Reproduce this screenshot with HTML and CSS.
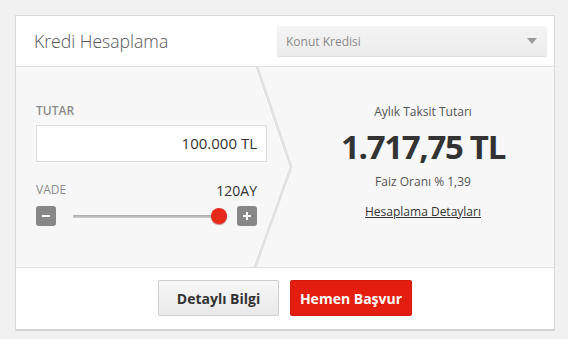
FILE: index.html
```html
<!DOCTYPE html>
<html lang="tr">
<head>
<meta charset="utf-8">
<title>Kredi Hesaplama</title>
<link rel="stylesheet" href="styles.css">
</head>
<body>
<div class="card">
  <div class="head">
    <div class="title">Kredi Hesaplama</div>
    <div class="select">
      <span>Konut Kredisi</span>
      <svg class="caret" width="10" height="6" viewBox="0 0 10 6"><path d="M0 0H10L5 6Z" fill="#9a9a9a"/></svg>
    </div>
  </div>
  <div class="body">
    <svg class="chevron" width="538" height="200" viewBox="0 0 538 200">
      <polyline points="241,0 275,100 239,200" fill="none" stroke="#e2e2e2" stroke-width="3"/>
      <polyline points="239,0 273,100 237,200" fill="none" stroke="#fbfbfb" stroke-width="1"/>
    </svg>
    <div class="left">
      <div class="label strong">TUTAR</div>
      <div class="input">100.000 TL</div>
      <div class="vade-row">
        <span class="label">VADE</span>
        <span class="vade-val">120AY</span>
      </div>
      <div class="slider-row">
        <div class="sbtn"><svg width="20" height="20" viewBox="0 0 20 20"><rect x="6" y="9" width="8" height="2" fill="#fff"/></svg></div>
        <div class="track">
          <div class="line"></div>
          <div class="thumb"></div>
        </div>
        <div class="sbtn"><svg width="20" height="20" viewBox="0 0 20 20"><rect x="6" y="9" width="8" height="2" fill="#fff"/><rect x="9" y="6" width="2" height="8" fill="#fff"/></svg></div>
      </div>
    </div>
    <div class="right">
      <div class="r-label">Aylık Taksit Tutarı</div>
      <div class="amount">1.717,75 TL</div>
      <div class="rate">Faiz Oranı % 1,39</div>
      <a class="details" href="#">Hesaplama Detayları</a>
    </div>
  </div>
  <div class="foot">
    <button class="btn btn-light">Detaylı Bilgi</button>
    <button class="btn btn-red">Hemen Başvur</button>
  </div>
</div>
</body>
</html>
```

FILE: styles.css
```css
* { box-sizing: border-box; }
html, body { margin: 0; }
body {
  background: #f1f1f1;
  padding: 15px;
  font-family: "Open Sans", "Noto Sans", sans-serif;
  color: #333;
}
.card {
  width: 540px;
  background: #fff;
  border: 1px solid #dadada;
  border-bottom: 2px solid #d2d2d2;
}
.head {
  height: 51px;
  display: flex;
  align-items: center;
  justify-content: space-between;
  padding: 0 7px 0 18px;
  border-bottom: 1px solid #dedede;
}
.title {
  font-size: 17.6px;
  font-weight: 300;
  color: #555;
}
.select {
  width: 270px;
  height: 30px;
  display: flex;
  align-items: center;
  justify-content: space-between;
  padding: 0 10px 0 9px;
  background: linear-gradient(#f4f4f4, #ececec);
  border-radius: 2px;
  box-shadow: 0 1px 1px rgba(0,0,0,0.14);
  font-size: 12px;
  color: #8a8a8a;
}
.body {
  position: relative;
  height: 201px;
  display: flex;
  background: #f7f7f7;
  border-bottom: 1px solid #dedede;
}
.chevron {
  position: absolute;
  left: 0;
  top: 0;
  pointer-events: none;
}
.left {
  position: relative;
  width: 276px;
  padding: 36px 0 0 20px;
}
.label {
  font-size: 12px;
  color: #8c8c8c;
  line-height: 16px;
}
.label.strong { font-weight: 600; }
.input {
  margin-top: 6px;
  width: 231px;
  height: 37px;
  background: #fff;
  border: 1px solid #dcdcdc;
  text-align: right;
  padding-right: 9px;
  font-size: 15px;
  line-height: 35px;
  color: #333;
}
.vade-row {
  width: 221px;
  margin-top: 19px;
  display: flex;
  justify-content: space-between;
  align-items: center;
  height: 18px;
}
.vade-val {
  font-size: 14px;
  color: #333;
}
.slider-row {
  width: 221px;
  margin-top: 7px;
  display: flex;
  align-items: center;
  height: 20px;
}
.sbtn {
  width: 20px;
  height: 20px;
  background: #878787;
  border-radius: 3px;
}
.sbtn svg { display: block; }
.track {
  position: relative;
  flex: 1;
  height: 20px;
  margin: 0 10px 0 17px;
}
.line {
  position: absolute;
  left: 0;
  right: 8px;
  top: 9px;
  height: 3px;
  background: linear-gradient(#a9a9a9, #cfcfcf);
  border-radius: 1px;
}
.thumb {
  position: absolute;
  right: 0;
  top: 2px;
  width: 16px;
  height: 16px;
  border-radius: 50%;
  background: #e52a1a;
  box-shadow: 0 1px 1px rgba(120,0,0,0.45);
}
.right {
  position: relative;
  flex: 1;
  display: flex;
  flex-direction: column;
  align-items: center;
  padding-top: 37px;
}
.r-label {
  font-size: 12px;
  line-height: 16px;
  color: #555;
}
.amount {
  margin-top: 7px;
  font-size: 33px;
  font-weight: 700;
  line-height: 40px;
  letter-spacing: -1.3px;
  color: #333;
}
.rate {
  margin-top: 7px;
  font-size: 12px;
  line-height: 16px;
  color: #555;
}
.details {
  margin-top: 14px;
  font-size: 12px;
  line-height: 16px;
  color: #333;
  text-decoration: underline;
}
.foot {
  height: 61px;
  display: flex;
  justify-content: center;
  gap: 11px;
  padding-top: 12px;
}
.btn {
  height: 36px;
  font-family: inherit;
  font-size: 14px;
  font-weight: 700;
  border-radius: 2px;
  padding: 0;
  cursor: pointer;
}
.btn-light {
  width: 121px;
  background: linear-gradient(#f7f7f7, #e9e9e9);
  border: 1px solid #cfcfcf;
  color: #333;
}
.btn-red {
  width: 122px;
  background: #e41e0f;
  border: 1px solid #d81a0c;
  color: #fff;
}
```
